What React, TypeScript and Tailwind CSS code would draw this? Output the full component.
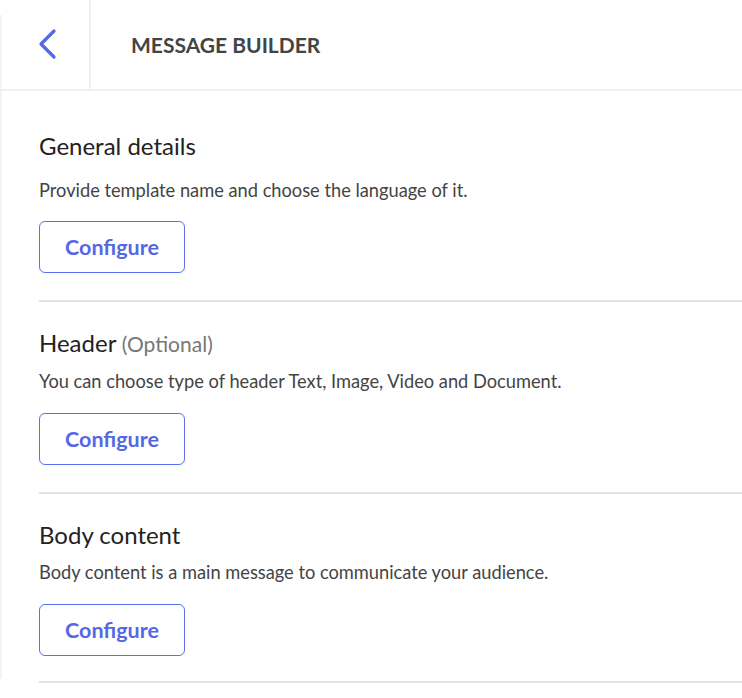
const sections = [
    {
        title: 'General details',
        optional: false,
        text: 'Provide template name and choose the language of it.',
    },
    {
        title: 'Header',
        optional: true,
        text: 'You can choose type of header Text, Image, Video and Document.',
    },
    {
        title: 'Body content',
        optional: false,
        text: 'Body content is a main message to communicate your audience.',
    },
]

export default function App() {
    return (
        <div className="w-full min-h-[698px] bg-white font-['Lato','Noto_Sans',sans-serif]">
            {/* top bar */}
            <div className="flex h-[91px] border-b-2 border-[#f0f0f0]">
                <div className="w-[91px] pt-[15px] border-r-2 border-[#f0f0f0]">
                    <div className="h-full border-l-2 border-[#f3f3f3] flex items-start pl-[36px] pt-[13px]">
                        <button className="text-[#5468e7]">
                            <svg width="20" height="32" viewBox="0 0 20 32" fill="none">
                                <path d="M16 3 L3 16 L16 29" stroke="currentColor" strokeWidth="3.2" strokeLinecap="round" strokeLinejoin="round" />
                            </svg>
                        </button>
                    </div>
                </div>
                <div className="flex items-center pl-[40px]">
                    <h1 className="text-[21px] font-bold text-[#444]">MESSAGE BUILDER</h1>
                </div>
            </div>

            {/* sections */}
            <div className="border-l-2 border-[#f3f3f3]">
                {sections.map((s, i) => (
                    <div key={s.title} className="pl-[37px]">
                        <div className={i === 0 ? 'pt-[41px]' : 'pt-[27px]'}>
                            <h2 className="text-[24px] leading-[28px] text-[#222]">
                                {s.title}
                                {s.optional && <span className="text-[21px] text-[#777]"> (Optional)</span>}
                            </h2>
                            <p className={`${i === 0 ? 'mt-[19px]' : 'mt-[12px]'} text-[18.25px] leading-[22px] text-[#444]`}>{s.text}</p>
                            <button className={`${i === 0 ? 'mt-[20px]' : 'mt-[21px]'} w-[146px] h-[52px] rounded-[6px] border border-[#5a70ee] text-[#5468e7] text-[21.5px] font-bold`}>
                                Configure
                            </button>
                        </div>
                        {i < sections.length - 1 && <div className="mt-[27px] h-[2px] bg-[#e3e3e3]" />}
                        {i === sections.length - 1 && <div className="h-[23px]" />}
                    </div>
                ))}
            </div>
            <div className="ml-[39px] mt-[2px] h-[2px] bg-[#e3e3e3]" />
        </div>
    )
}
